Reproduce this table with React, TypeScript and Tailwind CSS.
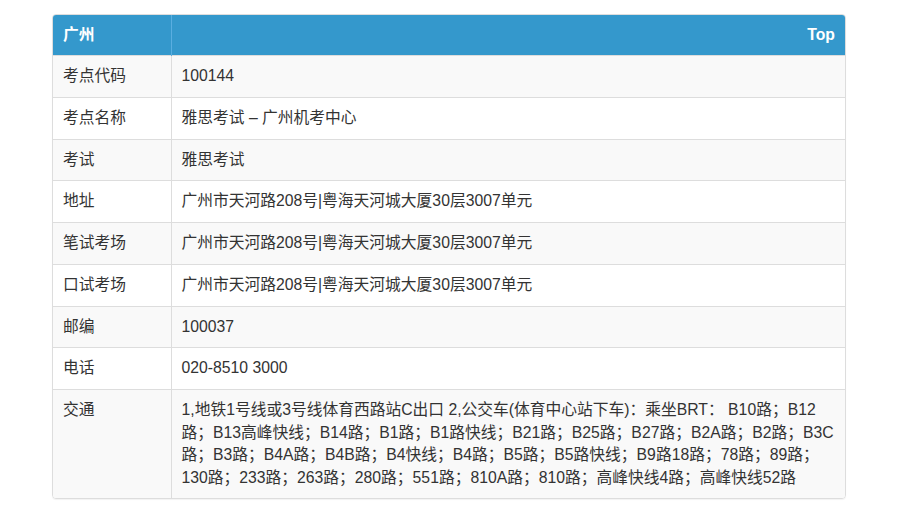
const rows: [string, string][] = [
  ['考点代码', '100144'],
  ['考点名称', '雅思考试 – 广州机考中心'],
  ['考试', '雅思考试'],
  ['地址', '广州市天河路208号|粤海天河城大厦30层3007单元'],
  ['笔试考场', '广州市天河路208号|粤海天河城大厦30层3007单元'],
  ['口试考场', '广州市天河路208号|粤海天河城大厦30层3007单元'],
  ['邮编', '100037'],
  ['电话', '020-8510 3000'],
  [
    '交通',
    '1,地铁1号线或3号线体育西路站C出口 2,公交车(体育中心站下车)：乘坐BRT： B10路；B12路；B13高峰快线；B14路；B1路；B1路快线；B21路；B25路；B27路；B2A路；B2路；B3C路；B3路；B4A路；B4B路；B4快线；B4路；B5路；B5路快线；B9路18路；78路；89路；130路；233路；263路；280路；551路；810A路；810路；高峰快线4路；高峰快线52路',
  ],
];

export default function App() {
  return (
    <div
      className="min-h-[513px] bg-white px-[52px] pt-[14px] text-[15.75px] leading-[22.5px] text-[#333]"
      style={{ fontFamily: '"Liberation Sans", "Noto Sans CJK SC", sans-serif' }}
    >
      <div className="w-[794px] overflow-hidden rounded-[4px] border border-[#ddd] shadow-[0_1px_1px_rgba(0,0,0,0.05)]">
        <table className="w-full border-collapse">
          <thead>
            <tr className="bg-[#3498cc] text-white">
              <th className="w-[118px] border-r border-[#5aaee0] px-[10px] py-[8.75px] text-left font-bold">广州</th>
              <th className="px-[10px] py-[8.75px] text-right font-bold">Top</th>
            </tr>
          </thead>
          <tbody>
            {rows.map(([label, value], i) => (
              <tr key={label} className={i % 2 === 0 ? 'bg-[#f9f9f9]' : 'bg-white'}>
                <td className="border-r border-t border-[#ddd] px-[10px] py-[9.125px] align-top">{label}</td>
                <td className="border-t border-[#ddd] px-[10px] py-[9.125px] align-top">{value}</td>
              </tr>
            ))}
          </tbody>
        </table>
      </div>
    </div>
  );
}
